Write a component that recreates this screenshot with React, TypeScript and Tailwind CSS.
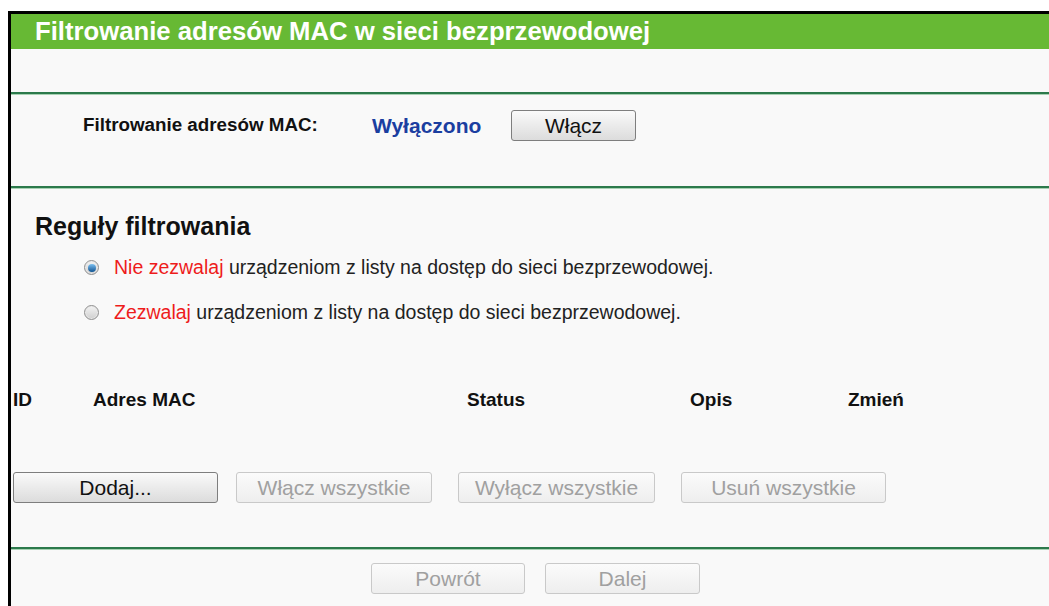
import React from "react";

const font = { fontFamily: '"Liberation Sans", Arial, sans-serif' };

function Rule() {
  return (
    <div className="flex flex-col">
      <div className="h-[2px] bg-[#2c7a4c]" />
      <div className="h-[1px] bg-[#a8d2b4]" />
    </div>
  );
}

function Btn({
  label,
  width,
  disabled,
  className = "",
}: {
  label: string;
  width: string;
  disabled?: boolean;
  className?: string;
}) {
  return (
    <button
      className={
        disabled
          ? `${width} ${className} h-[31px] rounded-[3px] border border-[#c9c9c9] bg-gradient-to-b from-[#fbfbfb] to-[#eeeeee] text-[21px] leading-none text-[#a0a0a0]`
          : `${width} ${className} h-[31px] rounded-[3px] border border-[#7e7e7e] bg-gradient-to-b from-[#fafafa] to-[#dcdcdc] text-[21px] leading-none text-[#111]`
      }
      style={font}
    >
      {label}
    </button>
  );
}

function Radio({ checked }: { checked?: boolean }) {
  return (
    <span className="flex h-[15px] w-[15px] shrink-0 items-center justify-center rounded-full border border-[#8f8f8f] bg-gradient-to-b from-[#f4f4f4] to-[#cfcfcf] shadow-[inset_0_0_0_1px_#e8e8e8]">
      {checked && (
        <span className="h-[8px] w-[8px] rounded-full bg-gradient-to-b from-[#7cc0f0] to-[#0c5593]" />
      )}
    </span>
  );
}

export default function App() {
  return (
    <div className="h-[606px] w-[1049px] bg-white pl-[8px] pt-[11px]" style={font}>
      <div className="flex h-[595px] flex-col border-l-[3px] border-t-[3px] border-black bg-[#f9f9f9]">
        {/* title bar */}
        <div className="flex h-[35px] items-center bg-[#67b934] pl-[24px] text-[25.7px] font-bold leading-none text-white">
          Filtrowanie adresów MAC w sieci bezprzewodowej
        </div>
        <div className="h-[43px]" />
        <Rule />

        {/* filter state */}
        <div className="h-[91px] pl-[72px] pt-[15px]">
          <div className="flex h-[31px] items-center">
            <span className="w-[289px] text-[18.8px] font-bold text-[#111]">
              Filtrowanie adresów MAC:
            </span>
            <span className="w-[139px] text-[21px] font-bold text-[#1b3ea0]">
              Wyłączono
            </span>
            <Btn label="Włącz" width="w-[125px]" />
          </div>
        </div>
        <Rule />

        {/* rules */}
        <div className="flex flex-col">
          <div className="mt-[23px] pl-[24px] text-[25px] font-bold leading-[29px] text-[#111]">
            Reguły filtrowania
          </div>
          <div className="mt-[15px] flex h-[23px] items-center gap-[15px] pl-[73px] text-[19.5px] text-[#222]">
            <Radio checked />
            <span>
              <span className="text-[#ee1c1c]">Nie zezwalaj</span> urządzeniom z listy na dostęp do sieci
              bezprzewodowej.
            </span>
          </div>
          <div className="mt-[22px] flex h-[23px] items-center gap-[15px] pl-[73px] text-[19.5px] text-[#222]">
            <Radio />
            <span>
              <span className="text-[#ee1c1c]">Zezwalaj</span> urządzeniom z listy na dostęp do sieci
              bezprzewodowej.
            </span>
          </div>

          {/* table head */}
          <div className="mt-[65px] flex h-[22px] items-center pl-[2px] text-[19px] font-bold text-[#111]">
            <span className="w-[80px]">ID</span>
            <span className="w-[374px]">Adres MAC</span>
            <span className="w-[223px]">Status</span>
            <span className="w-[158px]">Opis</span>
            <span>Zmień</span>
          </div>

          <div className="mt-[61px] flex pl-[2px]">
            <Btn label="Dodaj..." width="w-[205px]" />
            <Btn label="Włącz wszystkie" width="w-[196px]" className="ml-[18px]" disabled />
            <Btn label="Wyłącz wszystkie" width="w-[197px]" className="ml-[26px]" disabled />
            <Btn label="Usuń wszystkie" width="w-[205px]" className="ml-[26px]" disabled />
          </div>
        </div>

        <div className="h-[44px]" />
        <Rule />

        <div className="mt-[13px] flex gap-[20px] pl-[360px]">
          <Btn label="Powrót" width="w-[154px]" disabled />
          <Btn label="Dalej" width="w-[155px]" disabled />
        </div>
      </div>
    </div>
  );
}
